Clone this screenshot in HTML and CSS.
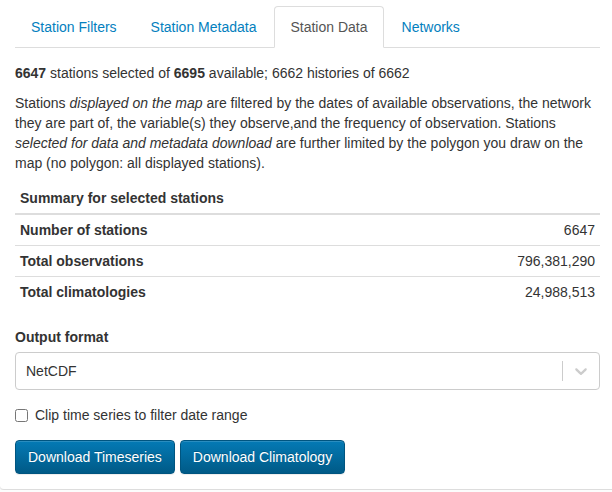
FILE: index.html
```html
<!DOCTYPE html>
<html lang="en">
<head>
<meta charset="utf-8">
<title>Station Data</title>
<link rel="stylesheet" href="styles.css">
</head>
<body>
<main class="panel">
  <nav class="tabs">
    <a class="tab" href="#filters">Station Filters</a>
    <a class="tab" href="#metadata">Station Metadata</a>
    <a class="tab tab-active" href="#data" aria-current="page">Station Data</a>
    <a class="tab" href="#networks">Networks</a>
  </nav>
  <section class="content">
    <p><b>6647</b> stations selected of <b>6695</b> available; 6662 histories of 6662</p>
    <p>Stations <em>displayed on the map</em> are filtered by the dates of available observations, the network they are part of, the variable(s) they observe,and the frequency of observation. Stations <em>selected for data and metadata download</em> are further limited by the polygon you draw on the map (no polygon: all displayed stations).</p>
    <table class="summary">
      <thead>
        <tr><th colspan="2">Summary for selected stations</th></tr>
      </thead>
      <tbody>
        <tr><th scope="row">Number of stations</th><td>6647</td></tr>
        <tr><th scope="row">Total observations</th><td>796,381,290</td></tr>
        <tr><th scope="row">Total climatologies</th><td>24,988,513</td></tr>
      </tbody>
    </table>
    <label class="field-label" for="format">Output format</label>
    <div class="select-box">
      <select id="format" class="select">
        <option>NetCDF</option>
      </select>
      <span class="select-indicator">
        <svg width="20" height="20" viewBox="0 0 20 20" aria-hidden="true"><path fill="currentColor" d="M4.516 7.548c0.436-0.446 1.043-0.481 1.576 0l3.908 3.747 3.908-3.747c0.533-0.481 1.141-0.446 1.574 0 0.436 0.445 0.408 1.197 0 1.615-0.406 0.418-4.695 4.502-4.695 4.502-0.217 0.223-0.502 0.335-0.787 0.335s-0.57-0.112-0.789-0.335c0 0-4.287-4.084-4.695-4.502s-0.436-1.17 0-1.615z"/></svg>
      </span>
    </div>
    <label class="check"><input type="checkbox">Clip time series to filter date range</label>
    <div class="actions">
      <button class="button" type="button">Download Timeseries</button>
      <button class="button" type="button">Download Climatology</button>
    </div>
  </section>
</main>
</body>
</html>
```
FILE: styles.css
```css
* {
  box-sizing: border-box;
}

body {
  margin: 0;
  background: #fcfcfc;
  color: #333;
  font: 14px/20px "Liberation Sans", Arial, sans-serif;
}

.panel {
  padding: 6px 0 15px;
  border-bottom: 1px solid #ddd;
  border-bottom-left-radius: 4px;
  background: #fff;
  box-shadow: 0 1px 1px rgba(0, 0, 0, 0.05);
}

.tabs {
  display: flex;
  gap: 2px;
  margin: 0 12px 0 15px;
  border-bottom: 1px solid #ddd;
}

.tab {
  margin-bottom: -1px;
  padding: 10px 15px;
  border: 1px solid transparent;
  border-radius: 4px 4px 0 0;
  color: #0480be;
  text-decoration: none;
}

.tab-active {
  border-color: #ddd #ddd #fff;
  background: #fff;
  color: #555;
}

.content {
  padding: 15px 12px 0 15px;
}

p {
  margin: 0 0 10px;
}

.summary {
  width: 100%;
  margin-bottom: 20px;
  border-collapse: collapse;
}

.summary th,
.summary td {
  padding: 5px;
  border-top: 1px solid #ddd;
  text-align: left;
}

.summary td {
  text-align: right;
}

.summary thead th {
  border-top: 0;
  border-bottom: 2px solid #ddd;
}

.field-label {
  display: block;
  margin-bottom: 5px;
  font-weight: bold;
}

.select-box {
  position: relative;
}

.select {
  display: block;
  width: 100%;
  height: 38px;
  padding: 0 10px;
  border: 1px solid #ccc;
  border-radius: 4px;
  background: #fff;
  color: #333;
  font: inherit;
  appearance: none;
}

.select-indicator {
  position: absolute;
  top: 9px;
  right: 1px;
  display: flex;
  padding: 0 8px;
  border-left: 1px solid #ccc;
  color: #ccc;
  pointer-events: none;
}

.check {
  display: flex;
  align-items: center;
  gap: 7px;
  margin: 15px 0;
}

.check input {
  width: 13px;
  height: 13px;
  margin: 0;
}

.actions {
  display: flex;
  gap: 5px;
}

.button {
  padding: 6px 12px;
  border: 1px solid #005580;
  border-radius: 4px;
  background: linear-gradient(#047ab5, #005a87);
  box-shadow: inset 0 1px 0 rgba(255, 255, 255, 0.15), 0 1px 1px rgba(0, 0, 0, 0.075);
  color: #fff;
  font: inherit;
  text-shadow: 0 -1px 0 rgba(0, 0, 0, 0.2);
}
```
